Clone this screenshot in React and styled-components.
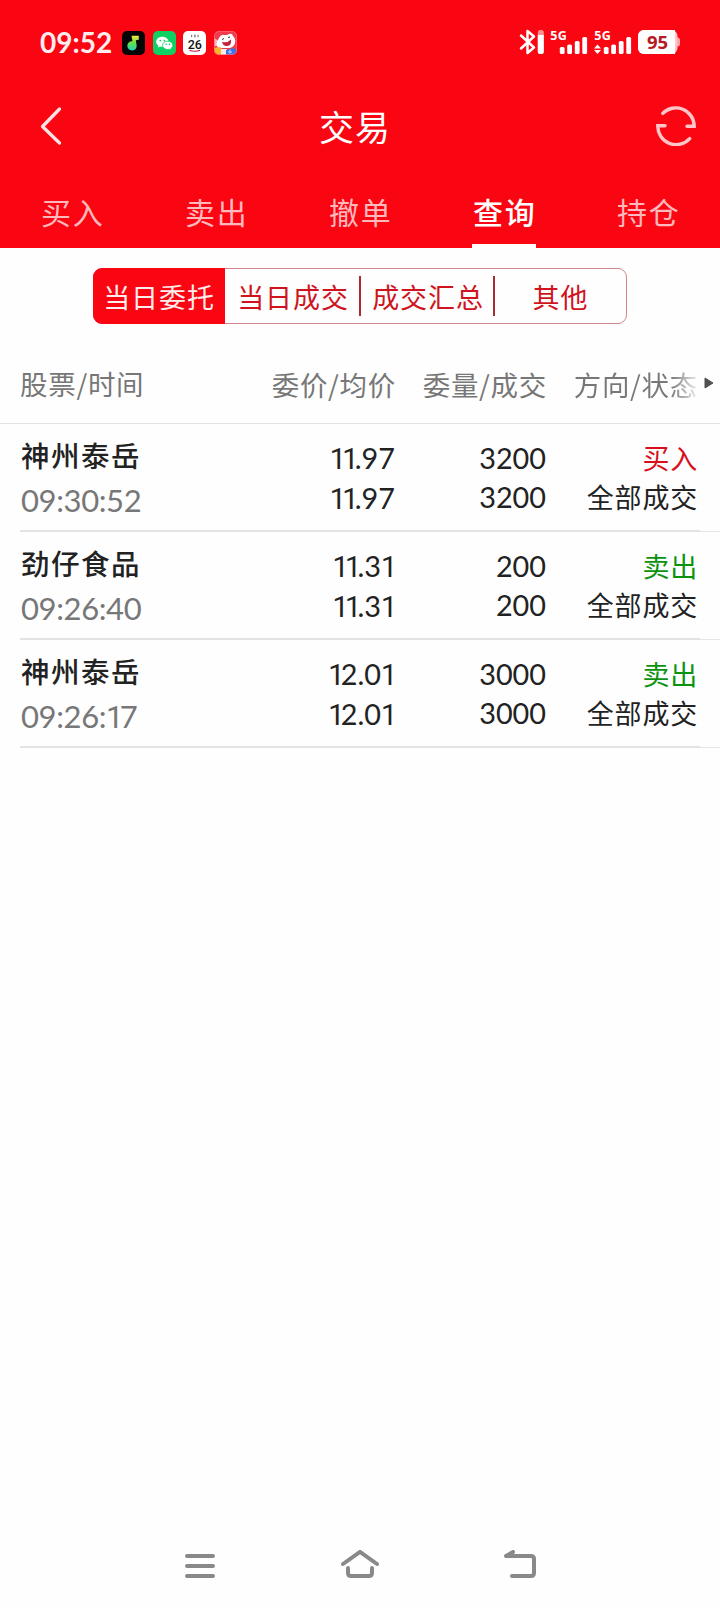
import React from 'react'
import styled, { createGlobalStyle } from "styled-components";

const tabs = ['买入', '卖出', '撤单', '查询', '持仓'];
const filters = ['当日委托', '当日成交', '成交汇总', '其他'];

const orders = [
  { id: 1, name: '神州泰岳', time: '09:30:52', price: '11.97', average: '11.97', amount: '3200', filled: '3200', side: 'buy', status: '全部成交' },
  { id: 2, name: '劲仔食品', time: '09:26:40', price: '11.31', average: '11.31', amount: '200', filled: '200', side: 'sell', status: '全部成交' },
  { id: 3, name: '神州泰岳', time: '09:26:17', price: '12.01', average: '12.01', amount: '3000', filled: '3000', side: 'sell', status: '全部成交' },
];

// the figure one has no foot and takes less room than the other digits
const Digits = ({ value }) => (
  <>
    {value.split('').map((char, i) => (
      char === '1' ? <One key={i} $last={i === value.length - 1}>1</One> : char
    ))}
  </>
)

const AppIcons = () => (
  <Icons>
    <svg width="23" height="24" viewBox="0 0 23 24">
      <defs>
        <linearGradient id="note" x1="0" y1="0" x2="0" y2="1">
          <stop offset="0" stopColor="#f2e63a" />
          <stop offset="0.5" stopColor="#5fe04a" />
          <stop offset="1" stopColor="#25cfc0" />
        </linearGradient>
      </defs>
      <rect width="23" height="24" rx="5" fill="#050505" />
      <path d="M9.500 4.800h7.300v4l-3 .4.900 5.500a4.700 4.700 0 1 1-4.200-4.500z" fill="url(#note)" />
    </svg>
    <svg width="23" height="24" viewBox="0 0 23 24">
      <rect width="23" height="24" rx="5" fill="#0fd063" />
      <path d="M9.300 5.800c-3.500 0-6.100 2.200-6.100 5 0 1.600.8 2.900 2.100 3.800l-.5 1.900 2.200-1.100c.8.2 1.500.3 2.300.3 3.500 0 6.200-2.200 6.200-4.900s-2.700-5-6.200-5z" fill="#fff" />
      <path d="M14.700 10.200c-3 0-5.200 1.800-5.200 4.100s2.200 4.200 5.200 4.200c.6 0 1.200-.1 1.800-.3l1.800.9-.4-1.600c1.200-.8 1.900-1.900 1.900-3.200 0-2.300-2.200-4.100-5.100-4.100z" fill="#fff" stroke="#0fd063" strokeWidth="0.800" />
      <circle cx="7.300" cy="9.600" r="0.900" fill="#0fd063" />
      <circle cx="11.400" cy="9.600" r="0.900" fill="#0fd063" />
      <circle cx="13.100" cy="13.200" r="0.800" fill="#0fd063" />
      <circle cx="16.600" cy="13.200" r="0.800" fill="#0fd063" />
    </svg>
    <svg width="23" height="24" viewBox="0 0 23 24">
      <rect width="23" height="24" rx="5" fill="#fff" />
      <path d="M8.700 3.800v2.300M11 4.200h1.800M11 5.800h1.800M15 3.800v2.300" stroke="#555" strokeWidth="0.900" />
      <path d="M6.500 18.800q5 2 10.500 0v1.200q-5 1.600-10.500 0z" fill="#c3154c" />
      <text x="11.800" y="17.500" textAnchor="middle" fontFamily="Roboto, sans-serif" fontSize="12.500" fontWeight="500" fill="#111">26</text>
    </svg>
    <svg width="23" height="24" viewBox="0 0 23 24">
      <defs>
        <clipPath id="mascot"><rect width="23" height="24" rx="5" /></clipPath>
      </defs>
      <g clipPath="url(#mascot)">
        <rect width="23" height="24" fill="#ef3b4c" />
        <path d="M0 7l5 3-2 5h-3z" fill="#fbb6bd" />
        <path d="M5 7q2-4 5-3l3 0q3-2 5-1l1 2q3 3 2 7t-5 5H4q-3-4 1-10z" fill="#fff" />
        <path d="M8 11q6 1 9-2.500 1 6-4 6.500-4 .2-5-4z" fill="#c3233b" />
        <path d="M8 8.500l2-1M14 6.500l2-.5" stroke="#333" strokeWidth="1" />
        <path d="M0 17l6-1 3 3-1 5H0z" fill="#f8b62b" />
        <path d="M7 18h6v6H7z" fill="#fbe9ee" />
        <path d="M12 19l8-2 3 2v5H12z" fill="#3b74e8" />
        <path d="M14 21h4M16 18.500v4" stroke="#b9d2ff" strokeWidth="1" />
      </g>
      <rect x="0.500" y="0.500" width="22" height="23" rx="4.500" fill="none" stroke="#ff6b74" strokeWidth="0.700" />
    </svg>
  </Icons>
)

const SystemIcons = () => (
  <svg width="166" height="28" viewBox="0 0 166 28">
    <path d="M5 7.500L18 19.500L11.500 25V3L18 8.500L5 20.500" fill="none" stroke="#fff" strokeWidth="2.500" strokeLinejoin="round" strokeLinecap="round" />
    <rect x="21.800" y="2" width="6" height="24" rx="2.500" fill="#ff8e93" />
    <path d="M21.800 7h6v16.500a2.500 2.500 0 0 1-2.500 2.500h-1a2.500 2.500 0 0 1-2.500-2.500z" fill="#fff" />
    <g fill="#fff" fontFamily="'Open Sans', sans-serif" fontSize="12.500" fontWeight="700">
      <text x="34.300" y="12" textLength="16.500">5G</text>
      <text x="78.300" y="12" textLength="16.500">5G</text>
    </g>
    <g fill="#fff">
      <rect x="43.800" y="19" width="4.800" height="7" rx="1.600" />
      <rect x="51.200" y="16.500" width="4.800" height="9.500" rx="1.600" />
      <rect x="58.800" y="13" width="4.800" height="13" rx="1.600" />
      <rect x="66.300" y="9" width="4.800" height="17" rx="1.600" />
      <path d="M81.500 16.500l3.500 4h-7zM81.500 26l3.500-4h-7z" />
      <rect x="87.800" y="19" width="4.800" height="7" rx="1.600" />
      <rect x="95.200" y="16.500" width="4.800" height="9.500" rx="1.600" />
      <rect x="102.800" y="13" width="4.800" height="13" rx="1.600" />
      <rect x="110.300" y="9" width="4.800" height="17" rx="1.600" />
    </g>
    <path d="M159 9.500h2.500q2.500 0 2.500 2.500v4q0 2.500-2.500 2.500H159z" fill="#ff9da2" />
    <rect x="122" y="2" width="39.500" height="24" rx="6" fill="#ffc4c6" />
    <path d="M128 2h31v24h-31a6 6 0 0 1-6-6V8a6 6 0 0 1 6-6z" fill="#fff" />
    <text x="141.600" y="21" textAnchor="middle" fontFamily="'Open Sans', sans-serif" fontSize="18.500" fontWeight="700" fill="#b51a25">95</text>
  </svg>
)

const OrderRow = ({ order }) => (
  <Row>
    <Stock>
      <Name>{order.name}</Name>
      <Time><Digits value={order.time} /></Time>
    </Stock>
    <Figures>
      <span><Digits value={order.price} /></span>
      <span><Digits value={order.average} /></span>
    </Figures>
    <Figures>
      <span><Digits value={order.amount} /></span>
      <span><Digits value={order.filled} /></span>
    </Figures>
    <State>
      <Side $side={order.side}>{order.side === 'buy' ? '买入' : '卖出'}</Side>
      <span>{order.status}</span>
    </State>
  </Row>
)

const App = () => {
  return (
    <Screen>
      <GlobalStyle />
      <Header>
        <StatusBar>
          <Clock>09:52</Clock>
          <AppIcons />
          <SystemIcons />
        </StatusBar>
        <TitleBar>
          <svg width="24" height="40" viewBox="0 0 24 40">
            <path d="M19.500 3L2.500 20.500L19.500 37" fill="none" stroke="#ffe3e4" strokeWidth="3.300" strokeLinecap="round" strokeLinejoin="round" />
          </svg>
          <Title>交易</Title>
          <svg width="40" height="40" viewBox="0 0 40 40">
            <path d="M6.800 7.400A18.300 18.300 0 0 1 38.200 20.200H31M33.700 32.600A18.300 18.300 0 0 1 1.800 19.800H9" fill="none" stroke="#ffc5c8" strokeWidth="3.400" strokeLinecap="round" />
          </svg>
        </TitleBar>
        <Tabs>
          {tabs.map(tab => <Tab key={tab} $active={tab === '查询'}>{tab}</Tab>)}
        </Tabs>
      </Header>
      <Filters>
        {filters.map((filter, i) => (
          <Filter key={filter} $active={i === 0} $divided={i === 1 || i === 2}>{filter}</Filter>
        ))}
      </Filters>
      <Columns>
        <FirstHeading>股票/时间</FirstHeading>
        <Heading>委价/均价</Heading>
        <Heading>委量/成交</Heading>
        <Heading $faded>方向/状态</Heading>
        <More width="10" height="12" viewBox="0 0 10 12">
          <path d="M1 1L9 6L1 11z" fill="#505050" stroke="#505050" strokeLinejoin="round" />
        </More>
      </Columns>
      {orders.map(order => <OrderRow key={order.id} order={order} />)}
      <NavBar>
        <svg width="40" height="32" viewBox="0 0 40 32">
          <path d="M7 6h26M7 16h26M7 26h26" />
        </svg>
        <svg width="40" height="32" viewBox="0 0 40 32">
          <path d="M3 14L20 1.800L37 14M8 18v5q0 3 3 3h18q3 0 3-3v-5" />
        </svg>
        <svg width="40" height="32" viewBox="0 0 40 32">
          <path d="M13 2L6 6H31q3 0 3 3v14q0 3-3 3H12" />
        </svg>
      </NavBar>
    </Screen>
  )
}

export default App

const GlobalStyle = createGlobalStyle`
  body {
    margin: 0;
    background: #fff;
  }
  * {
    box-sizing: border-box;
  }
`;

const Screen = styled.div`
  display: flex;
  flex-direction: column;
  width: 720px;
  height: 1608px;
  background: #fefefe;
  color: #222;
  font-family: "Noto Sans CJK SC", sans-serif;
  font-size: 27px;
  white-space: nowrap;
  overflow: hidden;
  svg {
    display: block;
    flex: none;
  }
`;

const Header = styled.header`
  height: 248px;
  background: #fa0512;
  color: #fff;
`;

const StatusBar = styled.div`
  display: flex;
  align-items: center;
  height: 84px;
  padding: 0 38px 0 40px;
  > svg:last-child {
    margin-left: auto;
  }
`;

const Clock = styled.span`
  width: 82px;
  font-family: Lato, sans-serif;
  font-size: 28px;
  font-weight: 700;
  color: #ffeced;
`;

const Icons = styled.div`
  display: flex;
  gap: 7.700px;
  margin-top: 1px;
`;

const TitleBar = styled.div`
  display: flex;
  align-items: center;
  justify-content: space-between;
  height: 84px;
  padding: 0 24px 0 40px;
`;

const Title = styled.h1`
  margin: 0 10px 0 0;
  font-size: 35px;
  font-weight: 400;
  line-height: 40px;
  letter-spacing: 1px;
`;

const Tabs = styled.nav`
  display: grid;
  grid-template-columns: repeat(5, 1fr);
  grid-template-rows: 80px;
`;

const Tab = styled.span`
  justify-self: center;
  width: 64px;
  height: 80px;
  border-bottom: 4px solid ${({ $active }) => ($active ? '#fff' : 'transparent')};
  padding-left: 1px;
  color: ${({ $active }) => ($active ? '#fff' : '#ffb9bd')};
  font-size: 30px;
  font-weight: ${({ $active }) => ($active ? 500 : 400)};
  line-height: 87px;
  letter-spacing: 1.700px;
`;

const Filters = styled.div`
  display: grid;
  grid-template-columns: 131px 136px 134px 1fr;
  align-items: center;
  width: 534px;
  height: 56px;
  margin: 20px 0 0 93px;
  border: 1px solid #d6868b;
  border-radius: 9px;
`;

const Filter = styled.span`
  height: 40px;
  border-right: 2px solid ${({ $divided }) => ($divided ? '#a92a33' : 'transparent')};
  padding-left: 2px;
  color: #cf1420;
  line-height: 42px;
  letter-spacing: 0.900px;
  text-align: center;
  ${({ $active }) => $active && `
    height: 56px;
    margin: -1px 0 -1px -1px;
    border-radius: 9px 0 0 9px;
    border-right: 0;
    padding-left: 0;
    background: #fa0512;
    color: #ffecec;
    line-height: 58px;
  `}
`;

const Columns = styled.div`
  position: relative;
  display: grid;
  grid-template-columns: 225px 151px 151px 151px;
  height: 100px;
  padding-left: 20px;
  border-bottom: 1px solid #e2e2e2;
  color: #777;
  font-size: 27.500px;
  line-height: 120px;
  letter-spacing: 0.700px;
`;

const FirstHeading = styled.span`
  margin-top: -1px;
`;

const Heading = styled.span`
  text-align: right;
  ${({ $faded }) => $faded && `
    background: linear-gradient(to right, #777 82%, #eee 100%);
    background-clip: text;
    color: transparent;
  `}
`;

const More = styled.svg`
  position: absolute;
  top: 53px;
  right: 6px;
`;

const Row = styled.div`
  display: grid;
  grid-template-columns: 225px 151px 151px 151px;
  height: 108px;
  padding-left: 20px;
  background:
    linear-gradient(#e3e3e3, #e3e3e3) 20px 100% / 680px 2px no-repeat,
    linear-gradient(#e6e6e6, #e6e6e6) 100% 100% / 20px 1px no-repeat;
`;

const Stock = styled.div`
  display: flex;
  flex-direction: column;
  padding-left: 1px;
`;

const Name = styled.span`
  height: 56px;
  font-size: 28.500px;
  font-weight: 500;
  line-height: 62px;
  letter-spacing: 1.500px;
`;

const Time = styled.span`
  color: #777;
  font-family: Lato, sans-serif;
  font-size: 31px;
  line-height: 41px;
  letter-spacing: -0.400px;
`;

const Figures = styled.div`
  display: flex;
  flex-direction: column;
  padding: 15px 1px 0 0;
  font-family: Lato, sans-serif;
  font-size: 28.800px;
  line-height: 39px;
  text-align: right;
`;

const State = styled.div`
  display: flex;
  flex-direction: column;
  padding-top: 14px;
  line-height: 39px;
  letter-spacing: 0.800px;
  text-align: right;
`;

const Side = styled.span`
  color: ${({ $side }) => ($side === 'buy' ? '#d7101c' : '#0b930f')};
`;

const One = styled.span`
  font-family: Roboto, sans-serif;
  letter-spacing: ${({ $last }) => ($last ? '-2.200px' : '-3.700px')};
`;

const NavBar = styled.nav`
  display: flex;
  justify-content: space-between;
  margin: auto 180px 26px;
  svg {
    fill: none;
    stroke: #898989;
    stroke-width: 4;
    stroke-linecap: round;
    stroke-linejoin: round;
  }
`;
